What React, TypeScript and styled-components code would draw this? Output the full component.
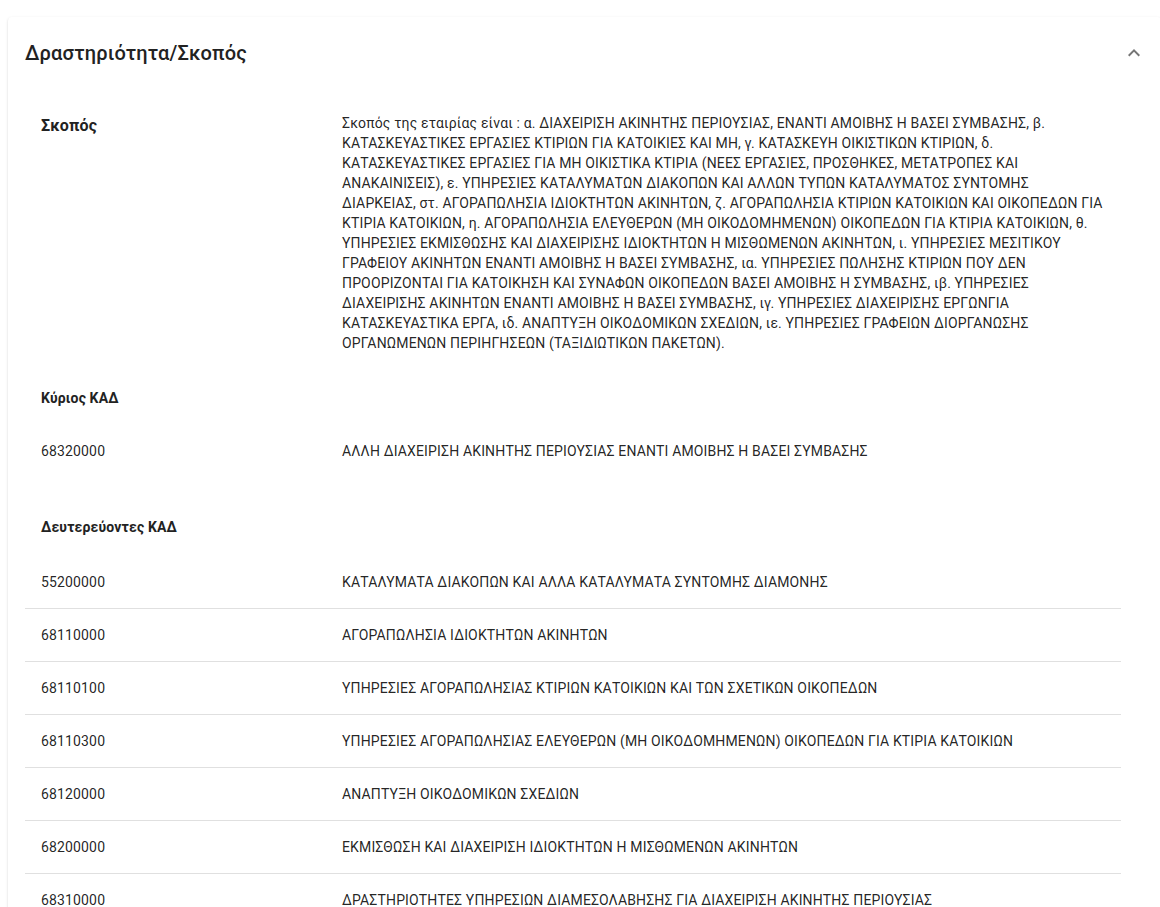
import styled, { createGlobalStyle } from "styled-components";

const GlobalStyle = createGlobalStyle`
  html, body {
    margin: 0;
    background: #fff;
    overflow: hidden;
  }
  body {
    padding: 17px 0 0 8px;
    font-family: Roboto, "Noto Sans", sans-serif;
    color: rgba(0, 0, 0, 0.87);
    letter-spacing: 0.15px;
  }
`;

const Card = styled.section`
  width: 1153px;
  background: #fff;
  border-radius: 4px;
  box-shadow: 0 2px 1px -1px rgba(0, 0, 0, 0.2), 0 1px 1px 0 rgba(0, 0, 0, 0.14),
    0 1px 3px 0 rgba(0, 0, 0, 0.12);
`;

const Summary = styled.div`
  display: flex;
  align-items: center;
  justify-content: space-between;
  min-height: 72px;
  padding: 0 15px 0 17px;
  box-sizing: border-box;
`;

const Title = styled.h2`
  margin: 0;
  font-size: 20px;
  font-weight: 500;
  line-height: 32px;
  color: #222;
`;

const Toggle = styled.span`
  display: flex;
  width: 24px;
  height: 24px;
  color: #757575;
`;

const Details = styled.div`
  padding: 8px 17px 16px;
`;

const Table = styled.div`
  width: 1096px;
`;

const Row = styled.div<{ $divider?: boolean; $head?: boolean }>`
  display: grid;
  grid-template-columns: 301px 795px;
  border-bottom: 1px solid ${(p) => (p.$divider ? "#e0e0e0" : "transparent")};
  font-size: 14px;
  line-height: ${(p) => (p.$head ? "24px" : "20px")};
`;

const Label = styled.div<{ $large?: boolean; $tight?: boolean }>`
  padding: ${(p) => (p.$large ? "17px" : "16px")} 16px ${(p) => (p.$tight ? "14px" : "16px")};
  font-size: ${(p) => (p.$large ? "16px" : "14px")};
  line-height: 24px;
  font-weight: 700;
  color: #222;
`;

const Cell = styled.div`
  padding: 16px;
`;

const Line = styled.span`
  display: block;
  white-space: nowrap;
`;

const Gap = styled.div`
  height: 21px;
`;

const scope = [
  "Σκοπός της εταιρίας είναι : α. ΔΙΑΧΕΙΡΙΣΗ ΑΚΙΝΗΤΗΣ ΠΕΡΙΟΥΣΙΑΣ, ΕΝΑΝΤΙ ΑΜΟΙΒΗΣ Η ΒΑΣΕΙ ΣΥΜΒΑΣΗΣ, β.",
  "ΚΑΤΑΣΚΕΥΑΣΤΙΚΕΣ ΕΡΓΑΣΙΕΣ ΚΤΙΡΙΩΝ ΓΙΑ ΚΑΤΟΙΚΙΕΣ ΚΑΙ ΜΗ, γ. ΚΑΤΑΣΚΕΥΗ ΟΙΚΙΣΤΙΚΩΝ ΚΤΙΡΙΩΝ, δ.",
  "ΚΑΤΑΣΚΕΥΑΣΤΙΚΕΣ ΕΡΓΑΣΙΕΣ ΓΙΑ ΜΗ ΟΙΚΙΣΤΙΚΑ ΚΤΙΡΙΑ (ΝΕΕΣ ΕΡΓΑΣΙΕΣ, ΠΡΟΣΘΗΚΕΣ, ΜΕΤΑΤΡΟΠΕΣ ΚΑΙ",
  "ΑΝΑΚΑΙΝΙΣΕΙΣ), ε. ΥΠΗΡΕΣΙΕΣ ΚΑΤΑΛΥΜΑΤΩΝ ΔΙΑΚΟΠΩΝ ΚΑΙ ΑΛΛΩΝ ΤΥΠΩΝ ΚΑΤΑΛΥΜΑΤΟΣ ΣΥΝΤΟΜΗΣ",
  "ΔΙΑΡΚΕΙΑΣ, στ. ΑΓΟΡΑΠΩΛΗΣΙΑ ΙΔΙΟΚΤΗΤΩΝ ΑΚΙΝΗΤΩΝ, ζ. ΑΓΟΡΑΠΩΛΗΣΙΑ ΚΤΙΡΙΩΝ ΚΑΤΟΙΚΙΩΝ ΚΑΙ ΟΙΚΟΠΕΔΩΝ ΓΙΑ",
  "ΚΤΙΡΙΑ ΚΑΤΟΙΚΙΩΝ, η. ΑΓΟΡΑΠΩΛΗΣΙΑ ΕΛΕΥΘΕΡΩΝ (ΜΗ ΟΙΚΟΔΟΜΗΜΕΝΩΝ) ΟΙΚΟΠΕΔΩΝ ΓΙΑ ΚΤΙΡΙΑ ΚΑΤΟΙΚΙΩΝ, θ.",
  "ΥΠΗΡΕΣΙΕΣ ΕΚΜΙΣΘΩΣΗΣ ΚΑΙ ΔΙΑΧΕΙΡΙΣΗΣ ΙΔΙΟΚΤΗΤΩΝ Η ΜΙΣΘΩΜΕΝΩΝ ΑΚΙΝΗΤΩΝ, ι. ΥΠΗΡΕΣΙΕΣ ΜΕΣΙΤΙΚΟΥ",
  "ΓΡΑΦΕΙΟΥ ΑΚΙΝΗΤΩΝ ΕΝΑΝΤΙ ΑΜΟΙΒΗΣ Η ΒΑΣΕΙ ΣΥΜΒΑΣΗΣ, ια. ΥΠΗΡΕΣΙΕΣ ΠΩΛΗΣΗΣ ΚΤΙΡΙΩΝ ΠΟΥ ΔΕΝ",
  "ΠΡΟΟΡΙΖΟΝΤΑΙ ΓΙΑ ΚΑΤΟΙΚΗΣΗ ΚΑΙ ΣΥΝΑΦΩΝ ΟΙΚΟΠΕΔΩΝ ΒΑΣΕΙ ΑΜΟΙΒΗΣ Η ΣΥΜΒΑΣΗΣ, ιβ. ΥΠΗΡΕΣΙΕΣ",
  "ΔΙΑΧΕΙΡΙΣΗΣ ΑΚΙΝΗΤΩΝ ΕΝΑΝΤΙ ΑΜΟΙΒΗΣ Η ΒΑΣΕΙ ΣΥΜΒΑΣΗΣ, ιγ. ΥΠΗΡΕΣΙΕΣ ΔΙΑΧΕΙΡΙΣΗΣ ΕΡΓΩΝΓΙΑ",
  "ΚΑΤΑΣΚΕΥΑΣΤΙΚΑ ΕΡΓΑ, ιδ. ΑΝΑΠΤΥΞΗ ΟΙΚΟΔΟΜΙΚΩΝ ΣΧΕΔΙΩΝ, ιε. ΥΠΗΡΕΣΙΕΣ ΓΡΑΦΕΙΩΝ ΔΙΟΡΓΑΝΩΣΗΣ",
  "ΟΡΓΑΝΩΜΕΝΩΝ ΠΕΡΙΗΓΗΣΕΩΝ (ΤΑΞΙΔΙΩΤΙΚΩΝ ΠΑΚΕΤΩΝ).",
];

const secondary: [string, string][] = [
  ["55200000", "ΚΑΤΑΛΥΜΑΤΑ ΔΙΑΚΟΠΩΝ ΚΑΙ ΑΛΛΑ ΚΑΤΑΛΥΜΑΤΑ ΣΥΝΤΟΜΗΣ ΔΙΑΜΟΝΗΣ"],
  ["68110000", "ΑΓΟΡΑΠΩΛΗΣΙΑ ΙΔΙΟΚΤΗΤΩΝ ΑΚΙΝΗΤΩΝ"],
  ["68110100", "ΥΠΗΡΕΣΙΕΣ ΑΓΟΡΑΠΩΛΗΣΙΑΣ ΚΤΙΡΙΩΝ ΚΑΤΟΙΚΙΩΝ ΚΑΙ ΤΩΝ ΣΧΕΤΙΚΩΝ ΟΙΚΟΠΕΔΩΝ"],
  ["68110300", "ΥΠΗΡΕΣΙΕΣ ΑΓΟΡΑΠΩΛΗΣΙΑΣ ΕΛΕΥΘΕΡΩΝ (ΜΗ ΟΙΚΟΔΟΜΗΜΕΝΩΝ) ΟΙΚΟΠΕΔΩΝ ΓΙΑ ΚΤΙΡΙΑ ΚΑΤΟΙΚΙΩΝ"],
  ["68120000", "ΑΝΑΠΤΥΞΗ ΟΙΚΟΔΟΜΙΚΩΝ ΣΧΕΔΙΩΝ"],
  ["68200000", "ΕΚΜΙΣΘΩΣΗ ΚΑΙ ΔΙΑΧΕΙΡΙΣΗ ΙΔΙΟΚΤΗΤΩΝ Η ΜΙΣΘΩΜΕΝΩΝ ΑΚΙΝΗΤΩΝ"],
  ["68310000", "ΔΡΑΣΤΗΡΙΟΤΗΤΕΣ ΥΠΗΡΕΣΙΩΝ ΔΙΑΜΕΣΟΛΑΒΗΣΗΣ ΓΙΑ ΔΙΑΧΕΙΡΙΣΗ ΑΚΙΝΗΤΗΣ ΠΕΡΙΟΥΣΙΑΣ"],
];

export default function App() {
  return (
    <>
      <GlobalStyle />
      <Card>
        <Summary>
          <Title>Δραστηριότητα/Σκοπός</Title>
          <Toggle>
            <svg viewBox="0 0 24 24" width="24" height="24" fill="currentColor">
              <path d="M12 8l-6 6 1.41 1.41L12 10.83l4.59 4.58L18 14z" />
            </svg>
          </Toggle>
        </Summary>
        <Details>
          <Table>
            <Row>
              <Label $large>Σκοπός</Label>
              <Cell>
                {scope.map((line) => (
                  <Line key={line}>{line}</Line>
                ))}
              </Cell>
            </Row>
            <Row $head>
              <Label $tight>Κύριος ΚΑΔ</Label>
            </Row>
            <Row>
              <Cell>68320000</Cell>
              <Cell>ΑΛΛΗ ΔΙΑΧΕΙΡΙΣΗ ΑΚΙΝΗΤΗΣ ΠΕΡΙΟΥΣΙΑΣ ΕΝΑΝΤΙ ΑΜΟΙΒΗΣ Η ΒΑΣΕΙ ΣΥΜΒΑΣΗΣ</Cell>
            </Row>
          </Table>
          <Gap />
          <Table>
            <Row $head>
              <Label>Δευτερεύοντες ΚΑΔ</Label>
            </Row>
            {secondary.map(([code, name]) => (
              <Row key={code} $divider>
                <Cell>{code}</Cell>
                <Cell>{name}</Cell>
              </Row>
            ))}
          </Table>
        </Details>
      </Card>
    </>
  );
}
